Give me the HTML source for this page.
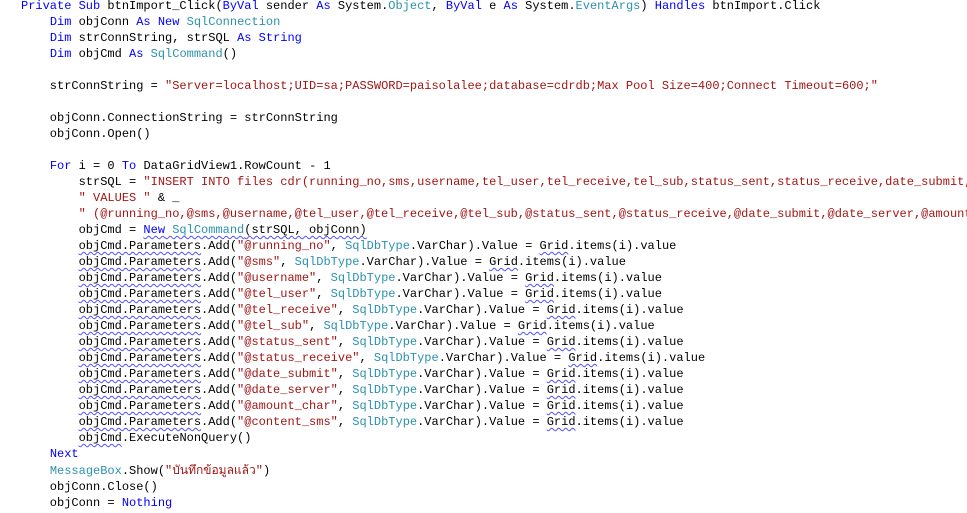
<!DOCTYPE html>
<html><head><meta charset="utf-8"><style>
html,body{margin:0;padding:0;background:#fff;width:967px;height:513px;overflow:hidden;position:relative}
pre{margin:0;position:absolute;left:21px;top:-2px;width:946px;height:515px;overflow:hidden;font-family:"Liberation Mono",monospace;font-size:12px;line-height:16px;color:#000;white-space:pre}
.k{color:#0000ff}.t{color:#2b91af}.s{color:#a31515}
.w{text-decoration:underline wavy #5050ff;text-decoration-thickness:1px;text-underline-offset:2px}
.th{font-family:"Liberation Sans","DejaVu Sans",sans-serif;font-size:12px}
</style></head><body><pre><span class="k">Private Sub</span> btnImport_Click(<span class="k">ByVal</span> sender <span class="k">As</span> System.<span class="t">Object</span>, <span class="k">ByVal</span> e <span class="k">As</span> System.<span class="t">EventArgs</span>) <span class="k">Handles</span> btnImport.Click
    <span class="k">Dim</span> objConn <span class="k">As New</span> <span class="t">SqlConnection</span>
    <span class="k">Dim</span> strConnString, strSQL <span class="k">As String</span>
    <span class="k">Dim</span> objCmd <span class="k">As</span> <span class="t">SqlCommand</span>()

    strConnString = <span class="s">"Server=localhost;UID=sa;PASSWORD=paisolalee;database=cdrdb;Max Pool Size=400;Connect Timeout=600;"</span>

    objConn.ConnectionString = strConnString
    objConn.Open()

    <span class="k">For</span> i = 0 <span class="k">To</span> DataGridView1.RowCount - 1
        strSQL = <span class="s">"INSERT INTO files cdr(running_no,sms,username,tel_user,tel_receive,tel_sub,status_sent,status_receive,date_submit,date_server,amount_char,content_sms)"</span> &amp; _
        <span class="s">" VALUES "</span> &amp; _
        <span class="s">" (@running_no,@sms,@username,@tel_user,@tel_receive,@tel_sub,@status_sent,@status_receive,@date_submit,@date_server,@amount_char,@content_sms)"</span>
        objCmd = <span class="w"><span class="k">New</span> <span class="t">SqlCommand</span>(strSQL, objConn)</span>
        <span class="w">objCmd.Parameters</span>.Add(<span class="s">"@running_no"</span>, <span class="t">SqlDbType</span>.VarChar).Value = <span class="w">Grid</span>.items(i).value
        <span class="w">objCmd.Parameters</span>.Add(<span class="s">"@sms"</span>, <span class="t">SqlDbType</span>.VarChar).Value = <span class="w">Grid</span>.items(i).value
        <span class="w">objCmd.Parameters</span>.Add(<span class="s">"@username"</span>, <span class="t">SqlDbType</span>.VarChar).Value = <span class="w">Grid</span>.items(i).value
        <span class="w">objCmd.Parameters</span>.Add(<span class="s">"@tel_user"</span>, <span class="t">SqlDbType</span>.VarChar).Value = <span class="w">Grid</span>.items(i).value
        <span class="w">objCmd.Parameters</span>.Add(<span class="s">"@tel_receive"</span>, <span class="t">SqlDbType</span>.VarChar).Value = <span class="w">Grid</span>.items(i).value
        <span class="w">objCmd.Parameters</span>.Add(<span class="s">"@tel_sub"</span>, <span class="t">SqlDbType</span>.VarChar).Value = <span class="w">Grid</span>.items(i).value
        <span class="w">objCmd.Parameters</span>.Add(<span class="s">"@status_sent"</span>, <span class="t">SqlDbType</span>.VarChar).Value = <span class="w">Grid</span>.items(i).value
        <span class="w">objCmd.Parameters</span>.Add(<span class="s">"@status_receive"</span>, <span class="t">SqlDbType</span>.VarChar).Value = <span class="w">Grid</span>.items(i).value
        <span class="w">objCmd.Parameters</span>.Add(<span class="s">"@date_submit"</span>, <span class="t">SqlDbType</span>.VarChar).Value = <span class="w">Grid</span>.items(i).value
        <span class="w">objCmd.Parameters</span>.Add(<span class="s">"@date_server"</span>, <span class="t">SqlDbType</span>.VarChar).Value = <span class="w">Grid</span>.items(i).value
        <span class="w">objCmd.Parameters</span>.Add(<span class="s">"@amount_char"</span>, <span class="t">SqlDbType</span>.VarChar).Value = <span class="w">Grid</span>.items(i).value
        <span class="w">objCmd.Parameters</span>.Add(<span class="s">"@content_sms"</span>, <span class="t">SqlDbType</span>.VarChar).Value = <span class="w">Grid</span>.items(i).value
        <span class="w">objCmd</span>.ExecuteNonQuery()
    <span class="k">Next</span>
    <span class="t">MessageBox</span>.Show(<span class="s">"<span class="th">บันทึกข้อมูลแล้ว</span>"</span>)
    objConn.Close()
    objConn = <span class="k">Nothing</span></pre></body></html>
